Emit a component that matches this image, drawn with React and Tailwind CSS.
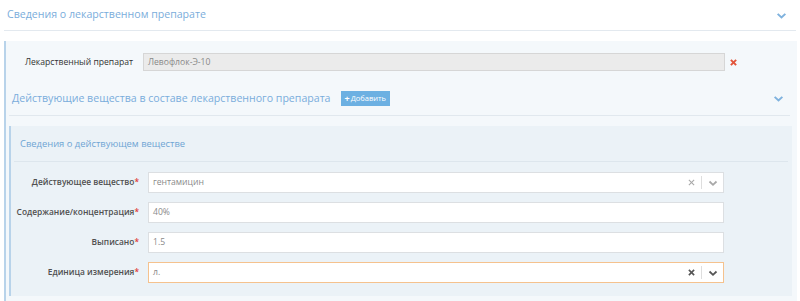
import { useState } from "react";

// small chevron used in section headers and selects
function Chevron({ className = "", size = 10 }) {
  return (
    <svg viewBox="0 0 10 10" width={size} height={size} className={className} fill="none" stroke="currentColor" strokeWidth="1.8">
      <polyline points="1.5,3.5 5,6.8 8.5,3.5" />
    </svg>
  );
}

function Cross({ className = "", size = 8, strokeWidth = 1.4 }) {
  return (
    <svg viewBox="0 0 8 8" width={size} height={size} className={className} fill="none" stroke="currentColor" strokeWidth={strokeWidth}>
      <line x1="1" y1="1" x2="7" y2="7" />
      <line x1="7" y1="1" x2="1" y2="7" />
    </svg>
  );
}

function Field({ label, value, select, focused }) {
  return (
    <div className="flex items-center h-[21px]">
      <div className="w-[129px] whitespace-nowrap text-right text-[8.4px] font-semibold text-[#505050] pr-[1px]">
        {label}
        <span className="text-[#e0403a]">*</span>
      </div>
      <div
        className={`ml-[8px] w-[576px] h-[21px] flex items-center bg-white border ${
          focused ? "border-[#f5c28e]" : "border-[#dcdfe2]"
        }`}
      >
        <span className="flex-1 pl-[4px] text-[8.6px] text-[#8a8a8a]">{value}</span>
        {select && (
          <div className="flex items-center pr-[5px]">
            <Cross className={focused ? "text-[#555]" : "text-[#a8a8a8]"} size={7} strokeWidth={focused ? 1.8 : 1.3} />
            <span className="mx-[6px] h-[13px] w-px bg-[#dedede]" />
            <Chevron className={focused ? "text-[#555]" : "text-[#a8a8a8]"} size={10} />
          </div>
        )}
      </div>
    </div>
  );
}

export default function App() {
  const [rows] = useState([
    { label: "Действующее вещество", value: "гентамицин", select: true },
    { label: "Содержание/концентрация", value: "40%" },
    { label: "Выписано", value: "1.5" },
    { label: "Единица измерения", value: "л.", select: true, focused: true },
  ]);

  return (
    <div className="w-[800px] h-[301px] overflow-hidden bg-white font-['Open_Sans',sans-serif]">
      {/* top header */}
      <div className="mx-[4px] h-[31px] flex items-center justify-between border-b border-[#e3e9ef] pl-[3px] pr-[9px]">
        <span className="text-[10.6px] text-[#7aaddb]">Сведения о лекарственном препарате</span>
        <Chevron className="text-[#7fb2de]" size={11} />
      </div>

      {/* outer panel */}
      <div className="mt-[10px] ml-[4px] mr-[3px] h-[260px] bg-[#f4f8fb] border-l-2 border-[#b8d3ea]">
        <div className="pt-[12px] flex items-center">
          <div className="w-[127px] whitespace-nowrap text-right text-[8.6px] text-[#333]">Лекарственный препарат</div>
          <div className="ml-[10px] w-[582px] h-[18px] flex items-center bg-[#ebebeb] border border-[#d6d6d6] pl-[4px] text-[8.6px] text-[#888]">
            Левофлок-Э-10
          </div>
          <Cross className="ml-[5px] text-[#e2543a]" size={7} strokeWidth={2.2} />
        </div>

        <div className="mt-[15px] ml-[3px] mr-[7px] h-[30px] flex items-center justify-between border-b border-[#e1e8ee] pl-[3px] pr-[6px] pb-[4px]">
          <div className="flex items-center">
            <span className="text-[10.6px] text-[#7aaddb]">Действующие вещества в составе лекарственного препарата</span>
            <button className="ml-[10px] h-[15px] px-[4px] flex items-center bg-[#6cb0e2] text-white text-[7.5px]">
              <span className="font-bold text-[9px] leading-none mr-[1px]">+</span>Добавить
            </button>
          </div>
          <Chevron className="text-[#7fb2de]" size={11} />
        </div>

        {/* inner panel */}
        <div className="mt-[10px] ml-[3px] mr-[5px] h-[170px] bg-[#ebf2f7] border-l-2 border-[#b8d3ea]">
          <div className="ml-[3px] mr-[4px] h-[36px] flex items-center border-b border-[#dde6ed] pl-[6px] pt-[2px]">
            <span className="text-[9.4px] text-[#6fa5d4]">Сведения о действующем веществе</span>
          </div>
          <div className="pt-[10px] flex flex-col gap-[9px]">
            {rows.map((r) => (
              <Field key={r.label} {...r} />
            ))}
          </div>
        </div>
      </div>
    </div>
  );
}
